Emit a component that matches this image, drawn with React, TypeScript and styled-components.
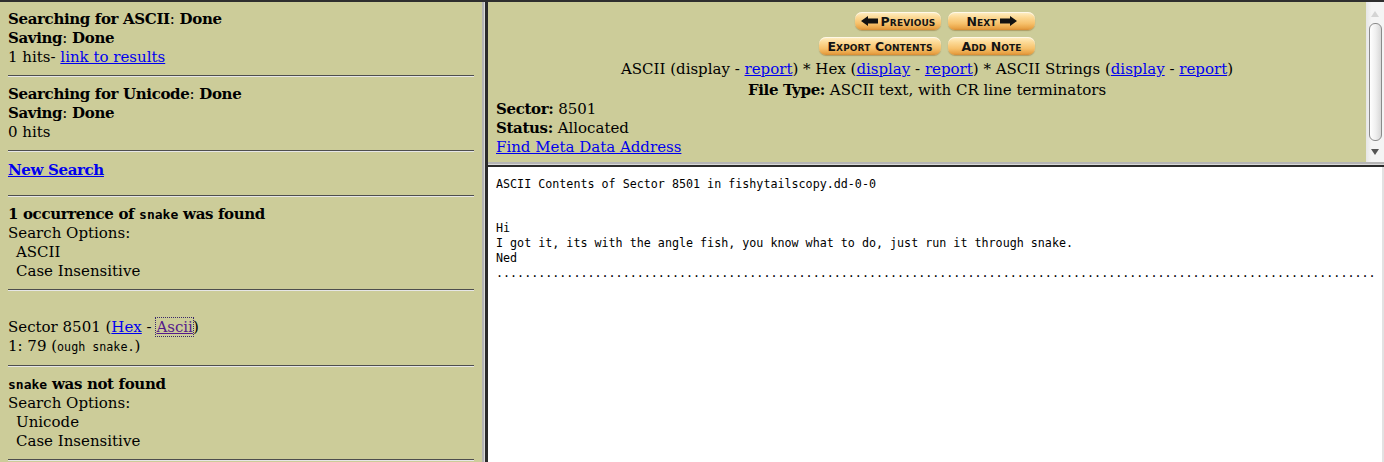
import React from "react";
import styled, { createGlobalStyle } from "styled-components";

const Global = createGlobalStyle`
  html, body { margin: 0; padding: 0; background: #ffffff; }
  #root { width: 1384px; height: 462px; }
  b { letter-spacing: -0.35px; }
`;

const Page = styled.div`
  width: 1384px;
  height: 462px;
  box-sizing: border-box;
  border-top: 2px solid #2e2e2e;
  display: grid;
  grid-template-columns: 482px 6px 1fr;
  overflow: hidden;
  font-family: "DejaVu Serif", serif;
  color: #000;
`;

const LeftFrame = styled.div`
  background: #cccc99;
  padding: 8px;
  overflow: hidden;
  font-size: 15px;
  line-height: 19px;
`;

const VDivider = styled.div`
  background: linear-gradient(to right, #b4b4b4 0 2px, #dadada 2px 3px, #2a2a2a 3px 6px);
`;

const HDivider = styled.div`
  background: linear-gradient(to bottom, #b4b4b4 0 2px, #dadada 2px 3px, #2a2a2a 3px 5px);
`;

const Rule = styled.hr`
  margin: 8px 0;
  height: 0;
  border: none;
  border-top: 1px solid #4e4e4e;
  border-bottom: 1px solid #e6e6e6;
`;

const Block = styled.div<{ $padTop?: number; $padBottom?: number }>`
  padding-top: ${(p) => p.$padTop ?? 0}px;
  padding-bottom: ${(p) => p.$padBottom ?? 0}px;
`;

const Line = styled.div<{ $indent?: boolean }>`
  padding-left: ${(p) => (p.$indent ? 8 : 0)}px;
  white-space: nowrap;
`;

const Link = styled.a<{ $visited?: boolean; $focus?: boolean }>`
  color: ${(p) => (p.$visited ? "#551a8b" : "#0000ee")};
  text-decoration: underline;
  cursor: pointer;
  outline: ${(p) => (p.$focus ? "1px dotted #3a2a6a" : "none")};
`;

const Tt = styled.span<{ $bold?: boolean }>`
  font-family: "DejaVu Sans Mono", monospace;
  font-size: ${(p) => (p.$bold ? 13 : 11.7)}px;
  font-weight: ${(p) => (p.$bold ? 700 : 400)};
  letter-spacing: 0;
`;

const RightCol = styled.div`
  display: grid;
  grid-template-rows: 160px 5px 1fr;
  min-width: 0;
`;

const TopFrame = styled.div`
  display: flex;
  background: #cccc99;
  overflow: hidden;
  min-height: 0;
`;

const TopContent = styled.div`
  flex: 1;
  padding: 10px 8px 8px;
  font-size: 15px;
  line-height: 19px;
  min-width: 0;
`;

const ButtonGrid = styled.div`
  display: grid;
  grid-template-columns: auto auto;
  justify-content: center;
  column-gap: 7px;
  row-gap: 7px;
  padding-bottom: 5px;
  & > :nth-child(odd) { justify-self: end; }
  & > :nth-child(even) { justify-self: start; }
`;

const OrangeButton = styled.button<{ $w: number }>`
  width: ${(p) => p.$w}px;
  height: 18px;
  padding: 0;
  border: none;
  border-radius: 7px;
  background: linear-gradient(to bottom, #fff0c8 0%, #fcd995 30%, #f6c06a 65%, #e8a245 90%, #d88c34 100%);
  box-shadow: 0 1px 1px rgba(120, 70, 0, 0.35), inset 0 1px 0 rgba(255, 255, 255, 0.6);
  display: flex;
  align-items: center;
  justify-content: center;
  gap: 3px;
  font-family: "DejaVu Sans", sans-serif;
  font-weight: 700;
  font-size: 12.5px;
  font-variant: small-caps;
  letter-spacing: 0.1px;
  color: #141414;
  cursor: pointer;
`;

const Centered = styled.div<{ $gapTop?: number }>`
  text-align: center;
  white-space: nowrap;
  padding-top: ${(p) => p.$gapTop ?? 0}px;
`;

const Scrollbar = styled.div`
  width: 18px;
  background: linear-gradient(to right, #e6e6e6, #f4f4f4 30%, #f4f4f4);
  display: flex;
  flex-direction: column;
  align-items: center;
  padding: 6px 0 4px;
  box-sizing: border-box;
`;

const Arrow = styled.div<{ $up?: boolean }>`
  width: 0;
  height: 0;
  border-left: 4px solid transparent;
  border-right: 4px solid transparent;
  ${(p) =>
    p.$up
      ? "border-bottom: 6px solid #d4d4d4;"
      : "border-top: 6px solid #555;"}
  margin: 3px 0;
`;

const Thumb = styled.div`
  flex: 1;
  width: 11px;
  margin: 3px 0 5px;
  border: 1px solid #8a8a8a;
  border-radius: 6px;
  background: linear-gradient(to right, #ffffff, #f0f0f0 50%, #d8d8d8);
`;

const BottomFrame = styled.div`
  background: #ffffff;
  padding: 10px 0 0 8px;
  font-family: "DejaVu Sans Mono", monospace;
  font-size: 11.7px;
  line-height: 14.83px;
  white-space: pre;
  overflow: hidden;
  border-right: 2px solid #e2e2e2;
  min-width: 0;
`;

const LeftArrow = () => (
  <svg width="17" height="10" viewBox="0 0 17 10">
    <polygon points="0,5 7,0 7,2.5 17,2.5 17,7.5 7,7.5 7,10" fill="#111" />
  </svg>
);

const RightArrow = () => (
  <svg width="17" height="10" viewBox="0 0 17 10">
    <polygon points="17,5 10,0 10,2.5 0,2.5 0,7.5 10,7.5 10,10" fill="#111" />
  </svg>
);

export default function App() {
  return (
    <>
      <Global />
      <Page>
        <LeftFrame>
          <Block>
            <Line><b>Searching for ASCII</b>: <b>Done</b></Line>
            <Line><b>Saving</b>: <b>Done</b></Line>
            <Line>1 hits- <Link>link to results</Link></Line>
          </Block>
          <Rule />
          <Block>
            <Line><b>Searching for Unicode</b>: <b>Done</b></Line>
            <Line><b>Saving</b>: <b>Done</b></Line>
            <Line>0 hits</Line>
          </Block>
          <Rule />
          <Block $padTop={1} $padBottom={7}>
            <Line><b><Link>New Search</Link></b></Line>
          </Block>
          <Rule />
          <Block>
            <Line><b>1 occurrence of <Tt $bold>snake</Tt> was found</b></Line>
            <Line>Search Options:</Line>
            <Line $indent>ASCII</Line>
            <Line $indent>Case Insensitive</Line>
          </Block>
          <Rule />
          <Block $padTop={19}>
            <Line>Sector 8501 (<Link>Hex</Link> - <Link $visited $focus>Ascii</Link>)</Line>
            <Line>1: 79 (<Tt>ough snake.</Tt>)</Line>
          </Block>
          <Rule />
          <Block>
            <Line><b><Tt $bold>snake</Tt> was not found</b></Line>
            <Line>Search Options:</Line>
            <Line $indent>Unicode</Line>
            <Line $indent>Case Insensitive</Line>
          </Block>
          <Rule />
        </LeftFrame>
        <VDivider />
        <RightCol>
          <TopFrame>
            <TopContent>
              <ButtonGrid>
                <OrangeButton $w={86}><LeftArrow />Previous</OrangeButton>
                <OrangeButton $w={87}>Next<RightArrow /></OrangeButton>
                <OrangeButton $w={122}>Export Contents</OrangeButton>
                <OrangeButton $w={87}>Add Note</OrangeButton>
              </ButtonGrid>
              <Centered>
                ASCII (display - <Link>report</Link>) * Hex (<Link>display</Link> - <Link>report</Link>) * ASCII Strings (<Link>display</Link> - <Link>report</Link>)
              </Centered>
              <Centered $gapTop={2}><b>File Type:</b> ASCII text, with CR line terminators</Centered>
              <Line><b>Sector:</b> 8501</Line>
              <Line><b>Status:</b> Allocated</Line>
              <Line><Link>Find Meta Data Address</Link></Line>
            </TopContent>
            <Scrollbar>
              <Arrow $up />
              <Thumb />
              <Arrow />
            </Scrollbar>
          </TopFrame>
          <HDivider />
          <BottomFrame>
            {"ASCII Contents of Sector 8501 in fishytailscopy.dd-0-0\n\n\nHi\nI got it, its with the angle fish, you know what to do, just run it through snake.\nNed\n" +
              ".".repeat(125)}
          </BottomFrame>
        </RightCol>
      </Page>
    </>
  );
}
